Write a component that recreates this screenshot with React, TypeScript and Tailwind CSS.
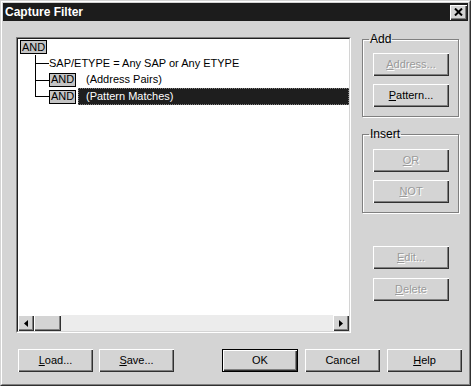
import React from "react";

const raised =
  "shadow-[inset_1px_1px_0_#ffffff,inset_-1px_-1px_0_#303030,inset_-2px_-2px_0_#808080]";

function Btn({
  pre = "",
  u = "",
  post = "",
  disabled = false,
  def = false,
  className = "",
}: {
  pre?: string;
  u?: string;
  post?: string;
  disabled?: boolean;
  def?: boolean;
  className?: string;
}) {
  const text = disabled
    ? "text-[#9a9a9a] [text-shadow:1px_1px_0_#ffffff]"
    : "text-black";
  if (def) {
    return (
      <div className={`border border-black bg-[#d4d4d4] ${className}`}>
        <div
          className={`flex h-full w-full items-center justify-center text-[11px] ${raised} ${text}`}
        >
          {pre}
          {u && <span className="underline">{u}</span>}
          {post}
        </div>
      </div>
    );
  }
  return (
    <div
      className={`flex items-center justify-center bg-[#d4d4d4] text-[11px] ${raised} ${text} ${className}`}
    >
      {pre}
      {u && <span className="underline underline-offset-1">{u}</span>}
      {post}
    </div>
  );
}

function AndBox() {
  return (
    <span className="flex h-[14px] w-[27px] items-center justify-center border border-black bg-[#c4c4c4] text-[11px] leading-none">
      AND
    </span>
  );
}

function Arrow({ dir }: { dir: "left" | "right" }) {
  return (
    <svg width="4" height="7" viewBox="0 0 4 7">
      {dir === "left" ? (
        <polygon points="4,0 4,7 0,3.5" fill="#000" />
      ) : (
        <polygon points="0,0 0,7 4,3.5" fill="#000" />
      )}
    </svg>
  );
}

export default function App() {
  return (
    <div
      className="h-[386px] w-[471px] bg-[#d4d4d4] text-black"
      style={{ fontFamily: '"Liberation Sans", Arial, sans-serif' }}
    >
      <div className="flex h-full w-full flex-col border border-t-[#d4d4d4] border-l-[#d4d4d4] border-r-[#303030] border-b-[#303030]">
        <div className="flex h-full w-full flex-col border border-t-white border-l-white border-r-[#808080] border-b-[#808080] p-px">
          {/* Title bar */}
          <div className="flex h-[18px] items-center justify-between bg-[#1c1c1c] pl-[2px] pr-[1px]">
            <span className="text-[12px] font-bold text-white">Capture Filter</span>
            <div
              className={`flex h-[15px] w-[17px] items-center justify-center bg-[#d4d4d4] ${raised}`}
            >
              <svg width="9" height="8" viewBox="0 0 9 8">
                <path d="M1 0.5 L8 7.5 M8 0.5 L1 7.5" stroke="#000" strokeWidth="2" />
              </svg>
            </div>
          </div>

          {/* Body */}
          <div className="flex flex-col">
            <div className="flex items-start pl-[13px]">
              {/* Tree panel */}
              <div className="mt-[16px] h-[296px] w-[335px] border border-t-[#808080] border-l-[#808080] border-r-white border-b-white">
                <div className="flex h-full w-full flex-col border border-t-[#202020] border-l-[#202020] border-r-[#d4d4d4] border-b-[#d4d4d4] bg-white">
                  <div className="relative flex-1 pl-[2px] text-[11px]">
                    <svg
                      className="absolute left-0 top-0"
                      width="40"
                      height="70"
                      viewBox="0 0 40 70"
                    >
                      <path
                        d="M17.5 16 V58 M17.5 24.5 H31 M17.5 41.5 H31 M17.5 57.5 H31"
                        stroke="#000"
                        strokeWidth="1"
                        shapeRendering="crispEdges"
                      />
                    </svg>
                    <div className="flex h-[16px] items-center">
                      <AndBox />
                    </div>
                    <div className="flex h-[16px] items-center pl-[29px]">
                      SAP/ETYPE = Any SAP or Any ETYPE
                    </div>
                    <div className="flex h-[17px] items-center pl-[29px]">
                      <AndBox />
                      <span className="pl-[10px]">(Address Pairs)</span>
                    </div>
                    <div className="flex h-[17px] items-center pl-[29px]">
                      <AndBox />
                      <div className="ml-[2px] flex h-full flex-1 items-center border border-dotted border-[#808080] bg-[#1e1e1e] pl-[7px] text-white">
                        (Pattern Matches)
                      </div>
                    </div>
                  </div>
                  {/* Horizontal scrollbar */}
                  <div className="flex h-[16px] bg-[#ececec]">
                    <div
                      className={`flex h-[16px] w-[16px] items-center justify-center bg-[#d4d4d4] ${raised}`}
                    >
                      <Arrow dir="left" />
                    </div>
                    <div className={`h-[16px] w-[27px] bg-[#d4d4d4] ${raised}`} />
                    <div className="flex-1" />
                    <div
                      className={`flex h-[16px] w-[16px] items-center justify-center bg-[#d4d4d4] ${raised}`}
                    >
                      <Arrow dir="right" />
                    </div>
                  </div>
                </div>
              </div>

              {/* Right column */}
              <div className="ml-[11px] mt-[12px] flex w-[97px] flex-col text-[11px]">
                <fieldset className="border border-[#808080] pb-[9px] shadow-[inset_1px_1px_0_#ffffff,1px_1px_0_#ffffff]">
                  <legend className="ml-[6px] px-[1px] text-[12px] leading-[13px]">Add</legend>
                  <Btn u="A" post="ddress..." disabled className="ml-[10px] mt-[7px] h-[23px] w-[76px]" />
                  <Btn u="P" post="attern..." className="ml-[10px] mt-[8px] h-[23px] w-[76px]" />
                </fieldset>
                <fieldset className="mt-[11px] border border-[#808080] pb-[9px] shadow-[inset_1px_1px_0_#ffffff,1px_1px_0_#ffffff]">
                  <legend className="ml-[6px] px-[1px] text-[12px] leading-[13px]">Insert</legend>
                  <Btn u="O" post="R" disabled className="ml-[10px] mt-[8px] h-[23px] w-[76px]" />
                  <Btn u="N" post="OT" disabled className="ml-[10px] mt-[8px] h-[23px] w-[76px]" />
                </fieldset>
                <Btn u="E" post="dit..." disabled className="ml-[11px] mt-[33px] h-[23px] w-[76px]" />
                <Btn u="D" post="elete" disabled className="ml-[11px] mt-[9px] h-[23px] w-[76px]" />
              </div>
            </div>

            {/* Bottom buttons */}
            <div className="mt-[16px] flex pl-[15px]">
              <Btn u="L" post="oad..." className="h-[23px] w-[75px]" />
              <Btn u="S" post="ave..." className="ml-[6px] h-[23px] w-[75px]" />
              <Btn pre="OK" def className="ml-[48px] h-[23px] w-[76px]" />
              <Btn pre="Cancel" className="ml-[7px] h-[23px] w-[75px]" />
              <Btn u="H" post="elp" className="ml-[7px] h-[23px] w-[75px]" />
            </div>
          </div>
        </div>
      </div>
    </div>
  );
}
